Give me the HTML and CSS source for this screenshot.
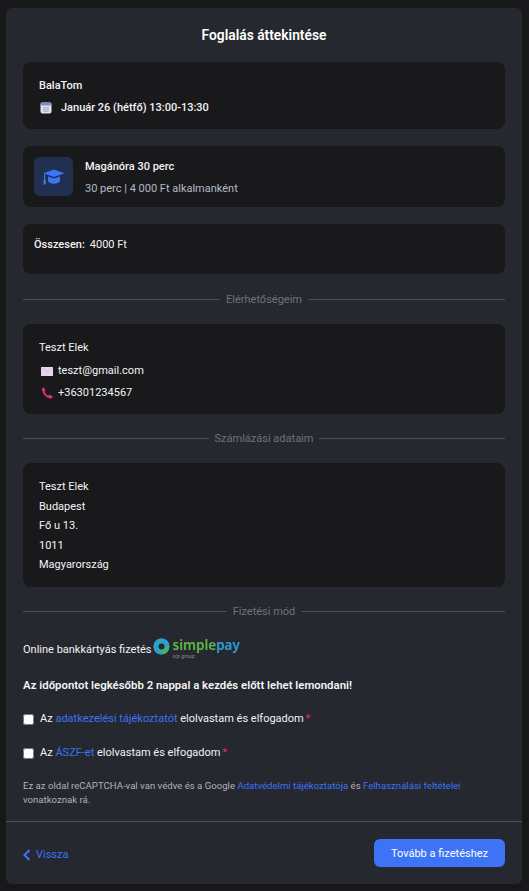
FILE: index.html
```html
<!DOCTYPE html>
<html lang="en">
<head>
  <meta charset="UTF-8" />
  <title>Foglalás áttekintése</title>
  <link rel="stylesheet" href="styles.css">
</head>
<body>
  <div class="card">
    <div class="content">
      <h1>Foglalás áttekintése</h1>

      <div class="box box-date">
        <div class="strong">BalaTom</div>
        <div class="date">
          <svg class="ico" viewBox="0 0 12 12" width="12" height="12">
            <rect x="0.5" y="0.5" width="11" height="11" rx="2" fill="#dfe3ee"/>
            <rect x="0.5" y="0.5" width="11" height="3" rx="1.2" fill="#7d8fb8"/>
            <path d="M3 5.5h6M3 7.5h6M3 9.5h6M4 5v5M6 5v5M8 5v5" stroke="#a3aec6" stroke-width="0.7"/>
          </svg>
          <span class="strong">Január 26 (hétfő) 13:00-13:30</span>
        </div>
      </div>

      <div class="box box-service">
        <div class="service-icon">
          <svg viewBox="0 0 22 16" width="22" height="16">
            <path d="M11 0.5 L21.5 4.2 L11 8 L0.5 4.2Z" fill="#3b76f6"/>
            <path d="M5 7.5 L11 9.6 L17 7.5 V12 C15.5 15.5 6.5 15.5 5 12Z" fill="#3b76f6"/>
            <rect x="1" y="5" width="1.2" height="8" fill="#3b76f6"/>
            <rect x="0.5" y="11" width="2.2" height="4.5" fill="#3b76f6"/>
          </svg>
        </div>
        <div class="service-text">
          <div class="strong">Magánóra 30 perc</div>
          <div class="muted">30 perc | 4 000 Ft alkalmanként</div>
        </div>
      </div>

      <div class="box box-total">
        <span class="strong">Összesen:</span>
        <span>4000 Ft</span>
      </div>

      <div class="divider"><span>Elérhetőségeim</span></div>

      <div class="box box-list">
        <div class="contact-name">Teszt Elek</div>
        <div class="contact">
          <svg class="ico-mail" viewBox="0 0 12 9" width="12" height="9">
            <rect width="12" height="9" fill="#e5d6ee"/>
            <path d="M0 0.5 L6 5 L12 0.5" fill="none" stroke="#c9b6d6" stroke-width="0.7"/>
          </svg>
          <span>teszt@gmail.com</span>
        </div>
        <div class="contact">
          <svg class="ico-phone" viewBox="0 0 12 12" width="12" height="12">
            <path d="M1 1.2 L3 0.4 L4.6 3.4 L3.4 4.6 C4 6.4 5.4 8 7.4 8.8 L8.6 7.6 L11.6 9.6 L10.6 11.4 C5.6 11.8 0.6 6.6 1 1.2Z" fill="#df2f7e"/>
          </svg>
          <span>+36301234567</span>
        </div>
      </div>

      <div class="divider"><span>Számlázási adataim</span></div>

      <div class="box box-address">
        <div>Teszt Elek</div>
        <div>Budapest</div>
        <div>Fő u 13.</div>
        <div>1011</div>
        <div>Magyarország</div>
      </div>

      <div class="divider"><span>Fizetési mód</span></div>

      <div class="pay-row">
        <span>Online bankkártyás fizetés</span>
        <div class="simple-logo">
          <svg viewBox="0 0 18 18" width="17" height="17">
            <circle cx="9" cy="9" r="8.5" fill="#3fb56b"/>
            <path d="M9 0.5 A8.5 8.5 0 0 1 17.5 9 L13 9 A4 4 0 1 0 9 13 L9 17.5 A8.5 8.5 0 0 1 9 0.5Z" fill="#2a9ed8"/>
            <circle cx="9" cy="9" r="3.2" fill="#25282e"/>
          </svg>
          <div class="logo-words">
            <div class="logo-name"><span class="simple">simple</span><span class="pay">pay</span></div>
            <div class="logo-sub">otp group</div>
          </div>
        </div>
      </div>

      <p class="notice">Az időpontot legkésőbb 2 nappal a kezdés előtt lehet lemondani!</p>

      <label class="check check-first">
        <input type="checkbox">
        <span>Az <a href="#">adatkezelési tájékoztatót</a> elolvastam és elfogadom <i>*</i></span>
      </label>
      <label class="check">
        <input type="checkbox">
        <span>Az <a href="#">ÁSZF-et</a> elolvastam és elfogadom <i>*</i></span>
      </label>

      <p class="captcha">Ez az oldal reCAPTCHA-val van védve és a Google <a href="#">Adatvédelmi tájékoztatója</a> és <a href="#">Felhasználási feltételei</a> vonatkoznak rá.</p>
    </div>

    <div class="footer">
      <a class="back" href="#">
        <svg viewBox="0 0 8 12" width="8" height="12">
          <path d="M6.5 1 L1.5 6 L6.5 11" fill="none" stroke="#3d73f5" stroke-width="2"/>
        </svg>
        Vissza
      </a>
      <button class="next">Tovább a fizetéshez</button>
    </div>
  </div>
</body>
</html>
```

FILE: styles.css
```css
* {
  box-sizing: border-box;
}
body {
  margin: 0;
  background: #18181a;
  color: #f2f3f5;
  font-family: Roboto, sans-serif;
  font-size: 11px;
  line-height: 16px;
  padding: 8px 7px 7px 6px;
}
a {
  color: #3d73f5;
  text-decoration: none;
}
.card {
  background: #25282e;
  border-radius: 6px;
  height: 876px;
}
.content {
  padding: 0 17px;
  height: 813px;
}
h1 {
  margin: 0;
  padding-top: 18px;
  height: 54px;
  text-align: center;
  font-size: 13.8px;
  line-height: 18px;
  font-weight: 600;
  color: #fff;
}
.strong {
  font-weight: 500;
}
.muted {
  color: #b4bac6;
}
.box {
  background: #19191b;
  border-radius: 8px;
}
.box-date {
  height: 67px;
  padding: 16px 16px 0;
  display: flex;
  flex-direction: column;
  gap: 6px;
}
.date {
  display: flex;
  align-items: center;
  gap: 9px;
}
.ico {
  margin-left: 1px;
}
.box-service {
  margin-top: 17px;
  height: 61px;
  padding: 11px;
  display: flex;
  gap: 12px;
}
.service-icon {
  width: 39px;
  height: 39px;
  background: #22304f;
  border-radius: 6px;
  display: flex;
  align-items: center;
  justify-content: center;
}
.service-text {
  display: flex;
  flex-direction: column;
  gap: 6px;
  padding-top: 2px;
}
.box-total {
  margin-top: 17px;
  height: 50px;
  padding: 13px 11px;
  display: flex;
  gap: 5px;
}
.divider {
  display: flex;
  align-items: center;
  gap: 6px;
  height: 16px;
  margin: 17px 0;
  color: #6d7280;
}
.divider span {
  padding-top: 2px;
}
.divider::before,
.divider::after {
  content: "";
  flex: 1;
  height: 1px;
  background: #4d4f54;
}
.box-list {
  height: 90px;
  padding: 16px 16px 0;
  display: flex;
  flex-direction: column;
  gap: 6px;
}
.box-list + .divider {
  margin-top: 16px;
}
.contact-name {
  margin-bottom: 1px;
}
.contact {
  display: flex;
  align-items: center;
  gap: 5px;
}
.ico-mail {
  margin-left: 2px;
}
.ico-phone {
  margin-left: 2px;
}
.box-address {
  height: 124px;
  padding: 16px 16px 0;
  display: flex;
  flex-direction: column;
  gap: 3.5px;
}
.box-address + .divider {
  margin-top: 16px;
}
.pay-row {
  display: flex;
  align-items: center;
  margin-top: 19px;
  height: 24px;
}
.simple-logo {
  display: flex;
  gap: 3px;
  margin-left: 1px;
  margin-top: -4px;
}
.logo-words {
  font-family: "Noto Sans", sans-serif;
}
.logo-name {
  font-size: 13.5px;
  line-height: 15px;
  font-weight: 600;
}
.simple {
  color: #5cb848;
}
.pay {
  color: #2a9ed8;
}
.logo-sub {
  font-size: 5px;
  line-height: 6px;
  font-style: italic;
  color: #8a8d93;
}
.notice {
  margin: 15px 0 0;
  font-size: 11.4px;
  font-weight: 600;
}
.check {
  display: flex;
  align-items: center;
  gap: 6px;
}
.check-first {
  margin-top: 18px;
}
.check + .check {
  margin-top: 18px;
}
.check input {
  margin: 0;
  width: 11px;
  height: 11px;
}
.check i {
  color: #e0344a;
  font-style: normal;
  margin-left: -1px;
}
.captcha {
  margin: 18px 0 0;
  font-size: 9.6px;
  line-height: 14px;
  color: #aeb3bd;
}
.footer {
  border-top: 1px solid #4d4f54;
  height: 63px;
  padding: 17px 17px 0;
  display: flex;
  justify-content: space-between;
  align-items: flex-start;
}
.back {
  display: flex;
  align-items: center;
  gap: 5px;
  height: 31px;
}
.next {
  width: 131px;
  height: 28px;
  padding-top: 2px;
  border: none;
  border-radius: 6px;
  background: #3d73f5;
  color: #fff;
  font-family: inherit;
  font-size: 11px;
}
```
